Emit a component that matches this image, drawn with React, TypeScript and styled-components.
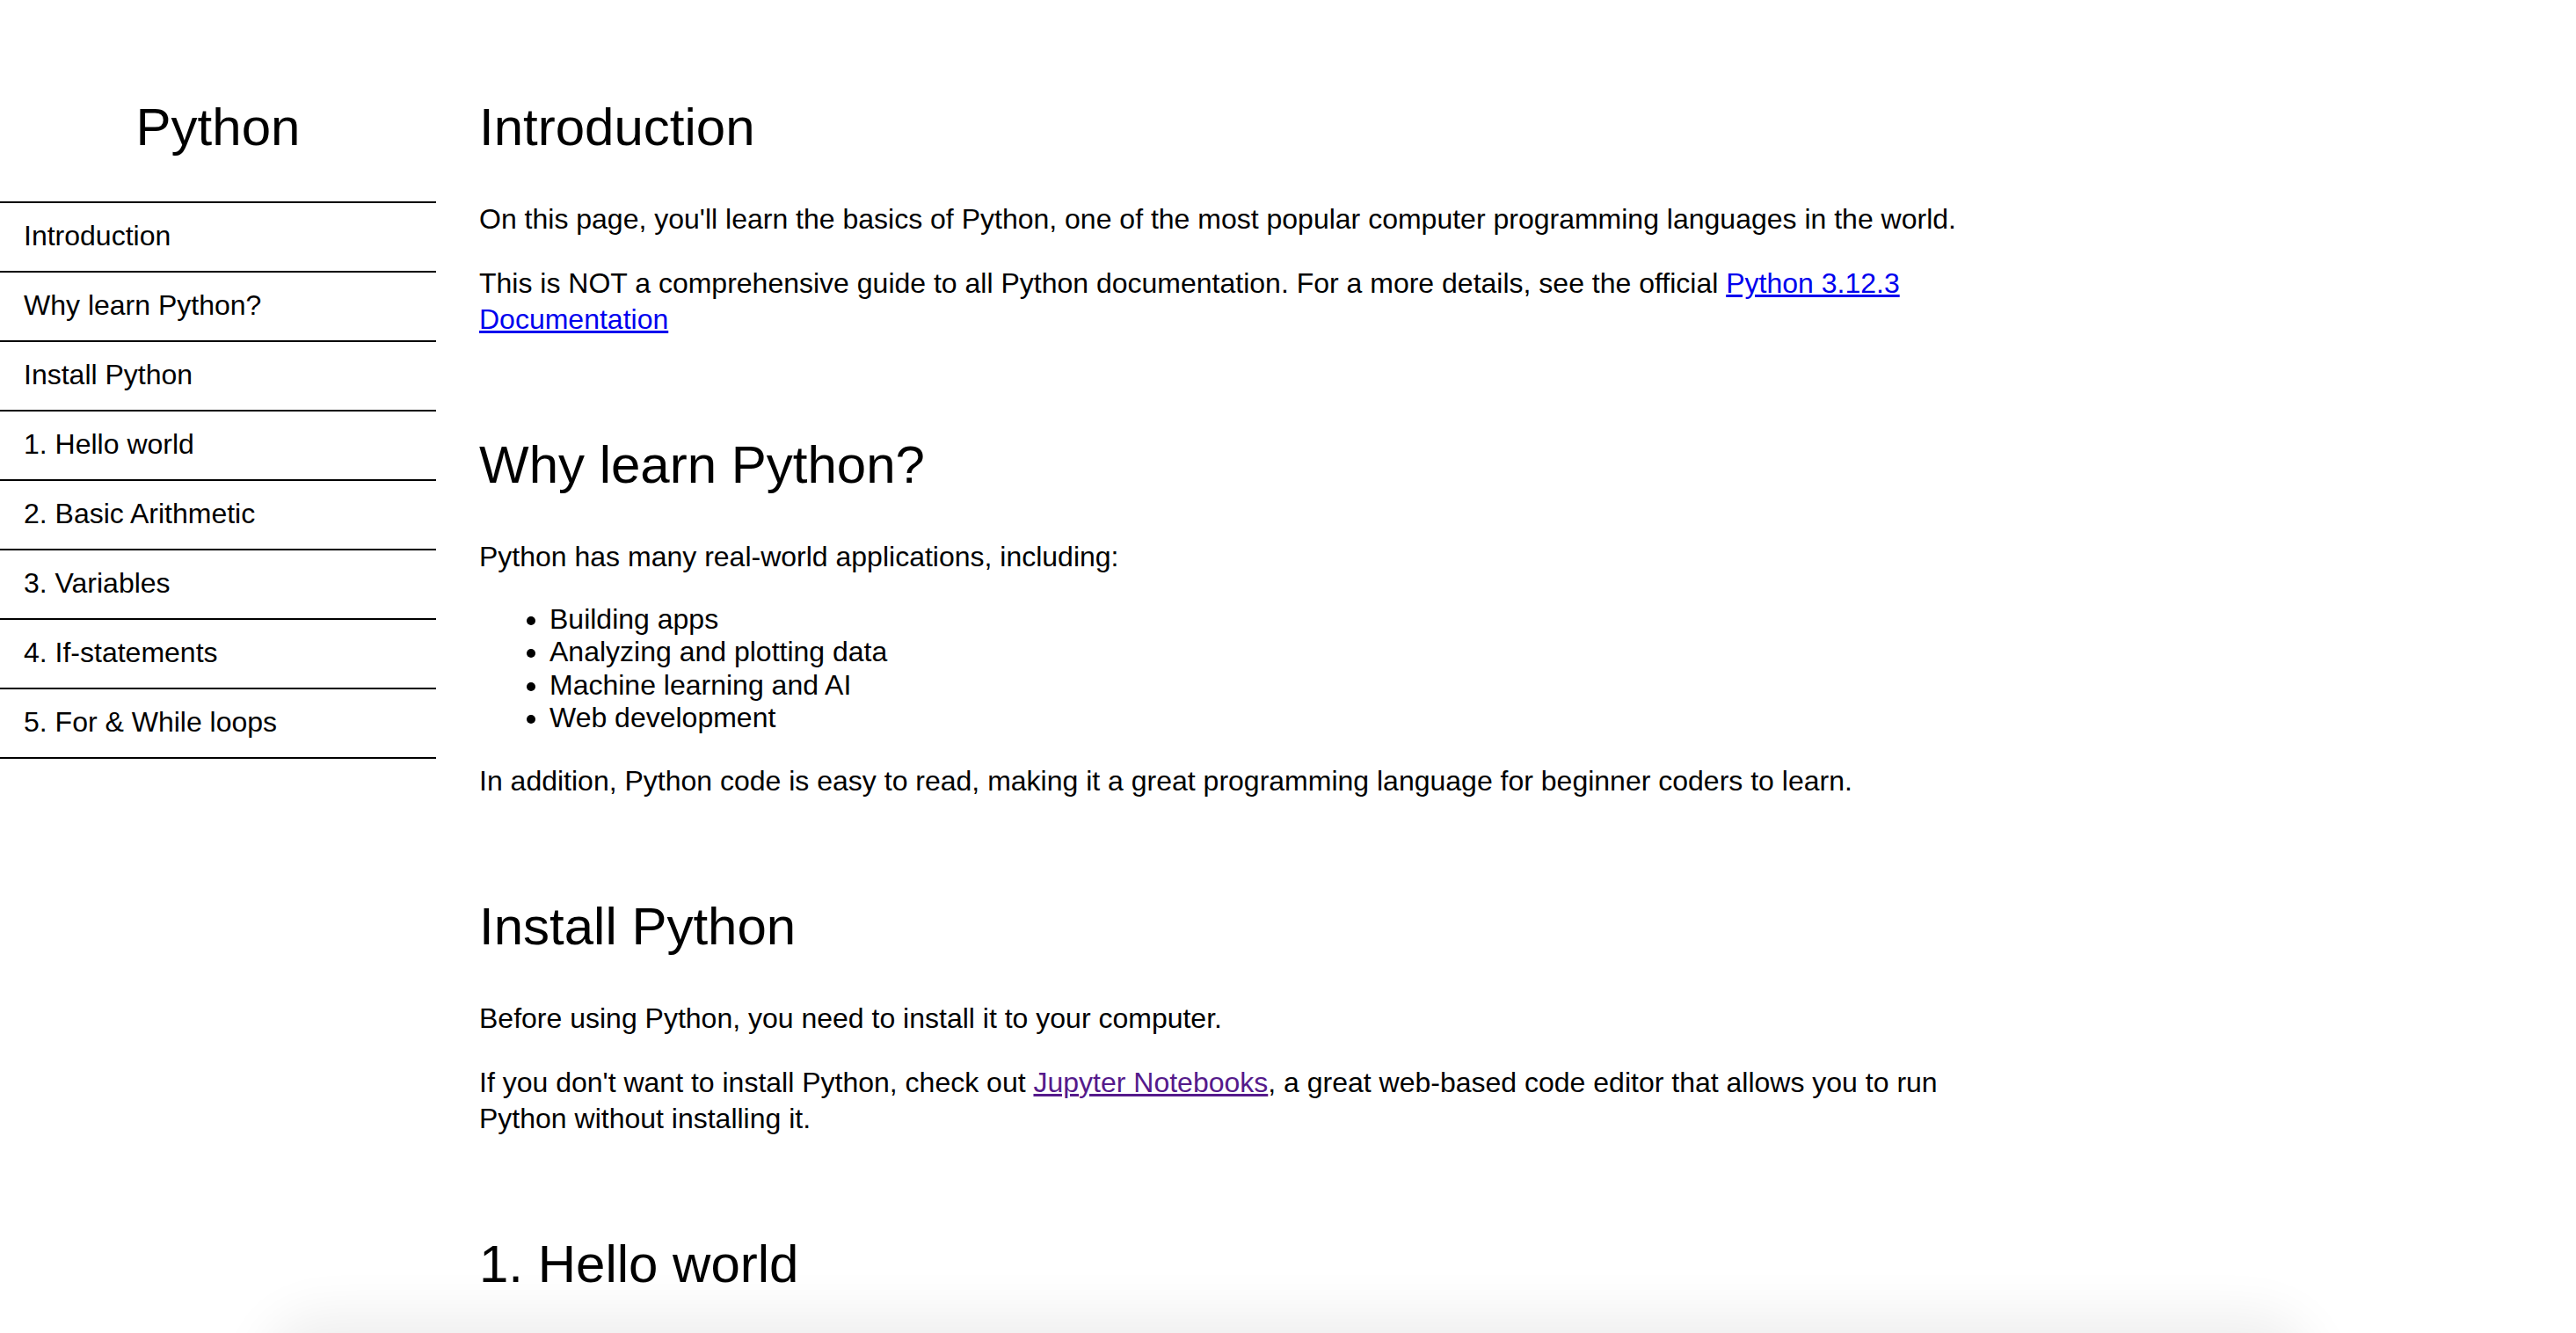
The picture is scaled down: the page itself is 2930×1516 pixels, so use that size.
import React from "react";
import styled, { createGlobalStyle } from "styled-components";

const GlobalStyle = createGlobalStyle`
  html, body {
    margin: 0;
    padding: 0;
    background: #ffffff;
  }
  body {
    font-family: "Liberation Sans", Arial, Helvetica, sans-serif;
    font-size: 32px;
    color: #000000;
  }
`;

const Page = styled.div`
  display: flex;
  align-items: flex-start;
  min-height: 1516px;
`;

const Sidebar = styled.nav`
  flex: 0 0 496px;
  width: 496px;
  padding-top: 60px;
`;

const Title = styled.h1`
  margin: 50px 0;
  font-size: 60px;
  font-weight: 400;
  line-height: 69px;
  text-align: center;
`;

const NavList = styled.ul`
  list-style: none;
  margin: 0;
  padding: 0;
  border-top: 2px solid #000;
`;

const NavItem = styled.li`
  border-bottom: 2px solid #000;
`;

const NavLink = styled.a`
  display: block;
  padding: 19px 26px 21px 27px;
  line-height: 37px;
  color: #000;
  text-decoration: none;
`;

const Main = styled.main`
  flex: 1 1 auto;
  padding: 60px 0 0 49px;
  max-width: 1720px;
`;

const Section = styled.section`
  padding-bottom: 28px;
`;

const Heading = styled.h1`
  margin: 50px 0;
  font-size: 60px;
  font-weight: 400;
  line-height: 69px;
`;

const Para = styled.p`
  margin: 32px 0;
  line-height: 41px;
`;

const List = styled.ul`
  margin: 32px 0;
  padding-left: 80px;
  list-style: disc;
`;

const ListItem = styled.li`
  line-height: 37.4px;
`;

const Link = styled.a<{ $visited?: boolean }>`
  color: ${(p) => (p.$visited ? "#551a8b" : "#0000ee")};
  text-decoration: underline;
`;

const BottomShadow = styled.div`
  position: fixed;
  left: 320px;
  right: 320px;
  bottom: -90px;
  height: 90px;
  border-radius: 45px;
  background: #ececec;
  box-shadow: 0 0 60px 20px rgba(0, 0, 0, 0.07);
  pointer-events: none;
`;

const navItems = [
  "Introduction",
  "Why learn Python?",
  "Install Python",
  "1. Hello world",
  "2. Basic Arithmetic",
  "3. Variables",
  "4. If-statements",
  "5. For & While loops",
];

export default function App() {
  return (
    <>
      <GlobalStyle />
      <Page>
        <Sidebar>
          <Title>Python</Title>
          <NavList>
            {navItems.map((item) => (
              <NavItem key={item}>
                <NavLink href="#">{item}</NavLink>
              </NavItem>
            ))}
          </NavList>
        </Sidebar>
        <Main>
          <Section>
            <Heading>Introduction</Heading>
            <Para>
              On this page, you'll learn the basics of Python, one of the most
              popular computer programming languages in the world.
            </Para>
            <Para>
              This is NOT a comprehensive guide to all Python documentation. For
              a more details, see the official{" "}
              <Link href="#">Python 3.12.3 Documentation</Link>
            </Para>
          </Section>
          <Section>
            <Heading>Why learn Python?</Heading>
            <Para>Python has many real-world applications, including:</Para>
            <List>
              <ListItem>Building apps</ListItem>
              <ListItem>Analyzing and plotting data</ListItem>
              <ListItem>Machine learning and AI</ListItem>
              <ListItem>Web development</ListItem>
            </List>
            <Para>
              In addition, Python code is easy to read, making it a great
              programming language for beginner coders to learn.
            </Para>
          </Section>
          <Section>
            <Heading>Install Python</Heading>
            <Para>Before using Python, you need to install it to your computer.</Para>
            <Para>
              If you don't want to install Python, check out{" "}
              <Link href="#" $visited>
                Jupyter Notebooks
              </Link>
              , a great web-based code editor that allows you to run Python
              without installing it.
            </Para>
          </Section>
          <Section>
            <Heading>1. Hello world</Heading>
          </Section>
        </Main>
      </Page>
      <BottomShadow />
    </>
  );
}
